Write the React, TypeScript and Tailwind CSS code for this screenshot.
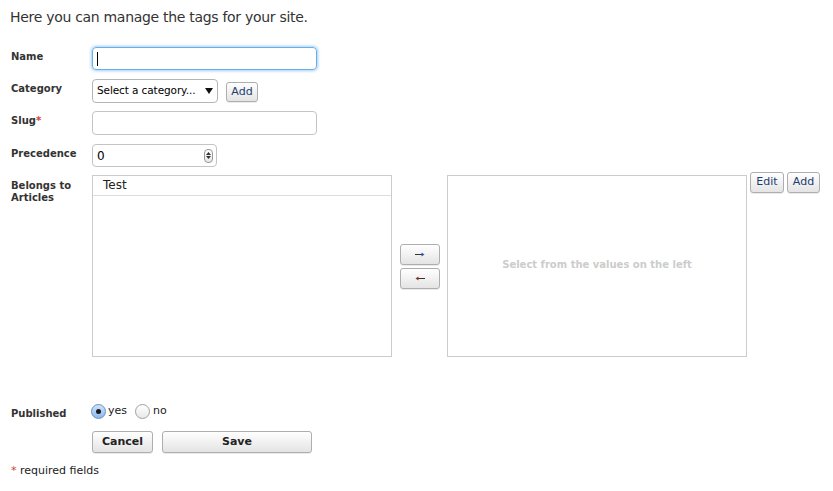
import React from "react";

const btn =
  "border border-[#aeaeae] rounded-[3px] bg-gradient-to-b from-[#ffffff] to-[#e4e4e4] shadow-[0_1px_0_rgba(0,0,0,0.08)] flex items-center justify-center";

function Label({ children, className = "" }: { children: React.ReactNode; className?: string }) {
  return (
    <div className={"w-[81px] shrink-0 text-[10px] leading-[12px] font-bold text-[#333] " + className}>
      {children}
    </div>
  );
}

export default function App() {
  return (
    <div
      className="w-[833px] h-[491px] bg-white text-[#333] overflow-hidden"
      style={{ fontFamily: '"DejaVu Sans", "Liberation Sans", sans-serif' }}
    >
      <div className="pl-[10px] pt-[8px] text-[14px] leading-[18px] tracking-[-0.3px] text-[#333]">
        Here you can manage the tags for your site.
      </div>

      <div className="pl-[11px] pt-[21px]">
        {/* Name */}
        <div className="flex items-start">
          <Label className="pt-[4px]">Name</Label>
          <div className="w-[225px] h-[23px] border border-[#6aafe6] rounded-[4px] shadow-[0_0_3px_1px_rgba(100,170,240,0.6)] flex items-center pl-[4px]">
            <div className="w-px h-[14px] bg-black" />
          </div>
        </div>

        {/* Category */}
        <div className="flex items-start mt-[9px]">
          <Label className="pt-[4px]">Category</Label>
          <div className="w-[126px] h-[24px] border border-[#b5b5b5] rounded-[4px] flex items-center justify-between pl-[4px] pr-[4px] text-[10.5px] tracking-[-0.1px] text-black">
            <span>Select a category...</span>
            <svg width="8" height="6" viewBox="0 0 8 6">
              <path d="M0 0 L8 0 L4 6 Z" fill="#111" />
            </svg>
          </div>
          <div className={btn + " ml-[8px] mt-[3px] w-[32px] h-[20px] text-[11px] text-[#1d3c6e]"}>Add</div>
        </div>

        {/* Slug */}
        <div className="flex items-start mt-[8px]">
          <Label className="pt-[4px]">
            Slug<span className="text-[#c8442c]">*</span>
          </Label>
          <div className="w-[225px] h-[24px] border border-[#c4c4c4] rounded-[4px]" />
        </div>

        {/* Precedence */}
        <div className="flex items-start mt-[9px]">
          <Label className="pt-[4px]">Precedence</Label>
          <div className="w-[125px] h-[23px] border border-[#c4c4c4] rounded-[4px] flex items-center justify-between pl-[4px] pr-[3px] text-[12px] text-black">
            <span>0</span>
            <div className="w-[9px] h-[14px] border border-[#999] rounded-[4px] flex flex-col items-center justify-center gap-[1px] bg-gradient-to-b from-white to-[#e6e6e6]">
              <svg width="5" height="3" viewBox="0 0 5 3"><path d="M0 3 L5 3 L2.5 0 Z" fill="#333" /></svg>
              <svg width="5" height="3" viewBox="0 0 5 3"><path d="M0 0 L5 0 L2.5 3 Z" fill="#333" /></svg>
            </div>
          </div>
        </div>

        {/* Belongs to Articles */}
        <div className="flex items-start mt-[8px]">
          <Label className="pt-[5px]">
            Belongs to
            <br />
            Articles
          </Label>
          <div className="w-[300px] h-[182px] border border-[#cccccc]">
            <div className="h-[20px] border-b border-[#dddddd] pl-[10px] text-[12px] leading-[19px] text-[#222]">Test</div>
          </div>
          <div className="h-[182px] flex flex-col justify-center gap-[3px] ml-[8px] mr-[7px]">
            <div className={btn + " w-[40px] h-[21px]"}>
              <svg width="10" height="5" viewBox="0 0 10 5">
                <path d="M0 2.5 H8" stroke="#333" strokeWidth="1" />
                <path d="M6.5 0.5 L9.5 2.5 L6.5 4.5 Z" fill="#2a5aa8" />
              </svg>
            </div>
            <div className={btn + " w-[40px] h-[21px]"}>
              <svg width="10" height="5" viewBox="0 0 10 5">
                <path d="M2 2.5 H10" stroke="#333" strokeWidth="1" />
                <path d="M3.5 0.5 L0.5 2.5 L3.5 4.5 Z" fill="#8a3a1a" />
              </svg>
            </div>
          </div>
          <div className="w-[300px] h-[182px] border border-[#cccccc] flex items-center justify-center pb-[4px] text-[10px] font-bold text-[#cccccc]">
            Select from the values on the left
          </div>
          <div className="flex gap-[3px] ml-[3px] -mt-[3px]">
            <div className={btn + " w-[34px] h-[21px] text-[11px] text-[#1d3c6e]"}>Edit</div>
            <div className={btn + " w-[33px] h-[21px] text-[11px] text-[#1d3c6e]"}>Add</div>
          </div>
        </div>

        {/* Published */}
        <div className="flex items-start mt-[46px]">
          <Label className="pt-[5px]">Published</Label>
          <div className="flex items-center text-[11px] text-[#222] -ml-px">
            <div className="w-[15px] h-[15px] rounded-full border border-[#6a8fbf] bg-gradient-to-b from-[#cfe4fb] to-[#8ab8ee] flex items-center justify-center">
              <div className="w-[5px] h-[5px] rounded-full bg-[#1a1a1a]" />
            </div>
            <span className="ml-[2px]">yes</span>
            <div className="ml-[8px] w-[15px] h-[15px] rounded-full border border-[#a0a0a0] bg-gradient-to-b from-white to-[#e9e9e9]" />
            <span className="ml-[3px]">no</span>
          </div>
        </div>

        {/* Buttons */}
        <div className="flex mt-[11px] pl-[81px] gap-[9px]">
          <div className={btn + " w-[61px] h-[22px] text-[11px] font-bold text-[#222]"}>Cancel</div>
          <div className={btn + " w-[150px] h-[22px] text-[11px] font-bold text-[#222]"}>Save</div>
        </div>

        <div className="mt-[11px] text-[11px] leading-[13px] text-[#222]">
          <span className="text-[#c8442c]">*</span> required fields
        </div>
      </div>
    </div>
  );
}
